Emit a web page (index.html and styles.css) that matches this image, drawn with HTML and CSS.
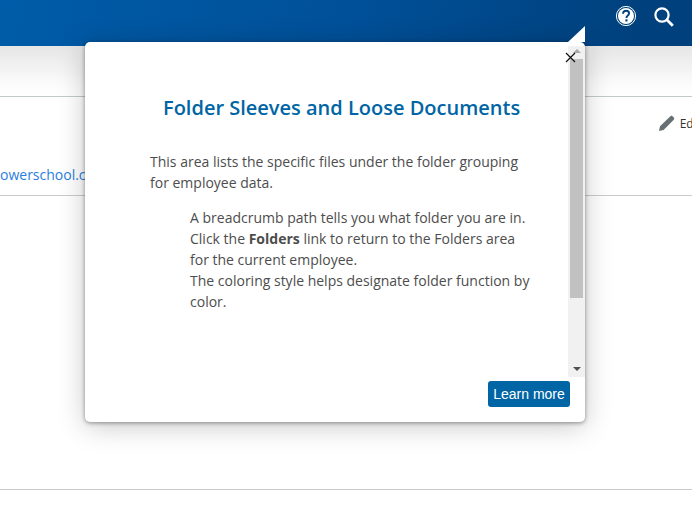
FILE: index.html
```html
<!DOCTYPE html>
<html lang="en">
<head>
<meta charset="utf-8">
<title>Folder Sleeves and Loose Documents</title>
<link rel="stylesheet" href="styles.css">
</head>
<body>
<header class="topbar">
  <svg class="icon-help" width="22" height="22" viewBox="0 0 22 22"><circle cx="11" cy="11" r="9.600" fill="none" stroke="#fff" stroke-width="1"/><circle cx="11" cy="11" r="8" fill="#fff"/><path d="M8 8.800c.1-1.900 1.300-3.100 3.100-3.100 1.800 0 3 1.100 3 2.600 0 1.200-.7 1.800-1.500 2.400-.8.600-1.100 1-1.100 2v.3" fill="none" stroke="#00427f" stroke-width="1.900"/><rect x="10.400" y="14.300" width="2.100" height="2.200" fill="#00427f"/></svg>
  <svg class="icon-search" width="22" height="22" viewBox="0 0 22 22"><circle cx="10" cy="10" r="6.600" fill="none" stroke="#fff" stroke-width="2.200"/><path d="M14.800 14.800l6 6" fill="none" stroke="#fff" stroke-width="2.800"/></svg>
</header>
<div class="subbar"></div>
<section class="record">
  <div class="edit"><svg width="18" height="18" viewBox="0 0 18 18"><path d="M1 17l1-4.800L12.400 2.300c.6-.6 1.500-.6 2.100 0l1.300 1.300c.6.600.6 1.500 0 2.100L5.600 15.900z" fill="#667073"/></svg><span>Edit</span></div>
  <a class="mail">owerschool.com</a>
</section>
<section class="blank"></section>

<div class="popover">
  <div class="arrow"></div>
  <div class="scrollbar">
    <span class="tri tri-up"></span>
    <span class="thumb"></span>
    <span class="tri tri-down"></span>
  </div>
  <button class="close" aria-label="Close"><svg width="11" height="11" viewBox="0 0 11 11"><path d="M1 1l9 9M10 1l-9 9" stroke="#111" stroke-width="1.200" fill="none"/></svg></button>
  <div class="content">
    <h1>Folder Sleeves and Loose Documents</h1>
    <p>This area lists the specific files under the folder grouping for employee data.</p>
    <ul>
      <li>A breadcrumb path tells you what folder you are in.</li>
      <li>Click the <b>Folders</b> link to return to the Folders area for the current employee.</li>
      <li>The coloring style helps designate folder function by color.</li>
    </ul>
  </div>
  <a class="learn">Learn more</a>
</div>
</body>
</html>
```
FILE: styles.css
```css
* { box-sizing: border-box; }
html, body { margin: 0; height: 100%; overflow: hidden; }
body { background: #fff; font-family: "Open Sans", sans-serif; color: #4d4d4d; position: relative; }

.topbar {
  height: 46px;
  background: linear-gradient(100deg, #005ca8 0%, #005099 50%, #00417d 92%);
  display: flex;
  justify-content: flex-end;
  align-items: flex-start;
  padding: 5px 18px 0 0;
  gap: 15px;
}
.subbar {
  height: 51px;
  background: linear-gradient(180deg, #e6e6e6 0%, #fbfbfb 75%, #fff 100%);
  border-bottom: 1px solid #c3caca;
}
.record {
  height: 99px;
  border-bottom: 1px solid #c8cccc;
  display: flex;
  flex-direction: column;
  align-items: flex-start;
  padding-top: 17px;
}
.edit {
  align-self: flex-end;
  margin-right: -9px;
  display: flex;
  align-items: center;
  gap: 4px;
  font-size: 12px;
  color: #333;
  white-space: nowrap;
}
.mail {
  margin-top: 33px;
  font-size: 14px;
  line-height: 20px;
  color: #2a7de1;
  white-space: nowrap;
}
.blank { height: 294px; border-bottom: 1px solid #c8cccc; }

.popover {
  position: absolute;
  left: 85px;
  top: 42px;
  width: 500px;
  height: 380px;
  background: #fff;
  border-radius: 5px;
  box-shadow: 0 1px 4px rgba(0, 0, 0, .4), 0 4px 28px rgba(0, 0, 0, .22);
}
.arrow {
  position: absolute;
  right: 0;
  top: -16px;
  width: 0;
  height: 0;
  border-left: 17px solid transparent;
  border-bottom: 16px solid #fff;
}
.close {
  position: absolute;
  left: 480px;
  top: 10px;
  width: 11px;
  height: 11px;
  padding: 0;
  border: 0;
  background: none;
  display: flex;
}
.scrollbar {
  position: absolute;
  left: 483px;
  top: 4px;
  width: 17px;
  height: 331px;
  background: #f1f1f1;
  display: flex;
  flex-direction: column;
  align-items: center;
}
.tri { width: 0; height: 0; border-left: 4px solid transparent; border-right: 4px solid transparent; }
.tri-up { border-bottom: 4px solid #a8a8a8; margin-top: 3px; }
.thumb { width: 13px; height: 239px; background: #c1c1c1; margin-top: 6px; }
.tri-down { border-top: 4px solid #505050; margin-top: auto; margin-bottom: 6px; }

.content { padding: 0 49px 0 65px; }
h1 {
  margin: 0;
  padding: 52px 0 0 13px;
  font-size: 20px;
  line-height: 28px;
  font-weight: 600;
  color: #0065a4;
  white-space: nowrap;
}
p {
  margin: 29px 0 0;
  font-size: 14px;
  line-height: 21px;
}
ul {
  list-style: none;
  margin: 14px 0 0;
  padding: 0 0 0 40px;
  font-size: 14px;
  line-height: 21px;
}
.learn {
  position: absolute;
  left: 403px;
  top: 339px;
  width: 82px;
  height: 26px;
  background: #0065a4;
  border-radius: 3px;
  color: #fff;
  font-family: "Liberation Sans", sans-serif;
  font-size: 14px;
  line-height: 26px;
  text-align: center;
}
```
